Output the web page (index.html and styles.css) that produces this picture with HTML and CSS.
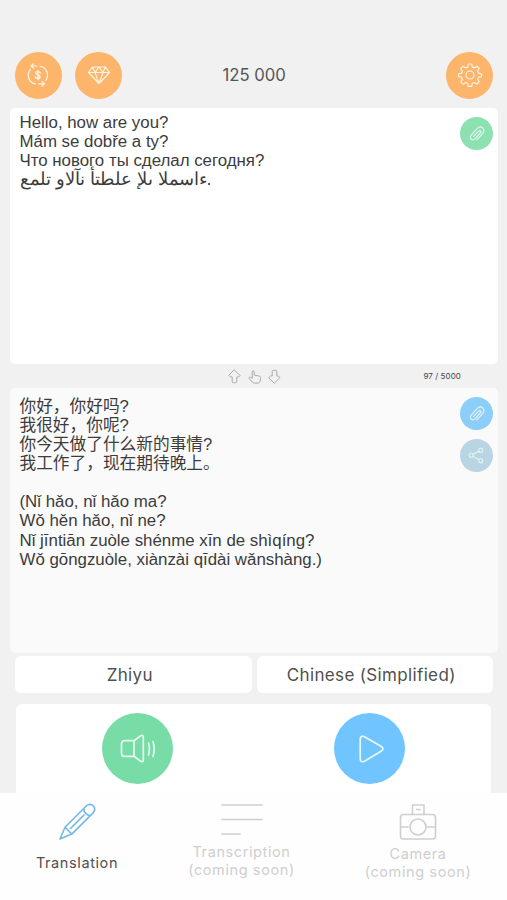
FILE: index.html
```html
<!DOCTYPE html>
<html lang="en">
<head>
  <meta charset="UTF-8" />
  <meta name="viewport" content="width=device-width, initial-scale=1.0"/>
  <title>Translator</title>
  <link rel="stylesheet" href="styles.css">
</head>
<body>
  <header class="topbar">
    <button class="round orange">
      <svg width="24" height="24" viewBox="0 0 24 24">
        <path d="M7.500.8 5 3l2.500 2.300M5.200 3H11M4.300 6.500A9 9 0 0 0 9.500 21M19.700 17.500A9 9 0 0 0 14 3.200M12.500 20.800H18M16 18.400l2.500 2.300L16 23"/>
        <path class="bold" d="M14.400 10c-.4-.9-1.200-1.300-2.400-1.300-2.700 0-2.900 2.700-.2 3.200 3 .5 2.900 3.600-.1 3.600-1.300 0-2.200-.5-2.500-1.500M12 7.500v9.300"/>
      </svg>
    </button>
    <button class="round orange">
      <svg width="24" height="24" viewBox="0 0 24 24">
        <path d="M5.500 4h13l4 5.500L12 20.500 1.500 9.500zM1.500 9.500h21M5.500 4l2.500 5.500 4 11 4-11L18.500 4M8 9.500 12 4l4 5.500"/>
      </svg>
    </button>
    <div class="balance">125 000</div>
    <button class="round orange">
      <svg width="26" height="26" viewBox="0 0 26 26">
        <path d="M11.300 2h3.400l.6 3.100 2 .8 2.700-1.700 2.300 2.300-1.700 2.700.8 2 3.100.6v2.800l-3.100.6-.8 2 1.700 2.700-2.300 2.300-2.700-1.700-2 .8-.6 3.100h-3.400l-.6-3.100-2-.8L6 22.200l-2.300-2.300 1.700-2.700-.8-2-3.100-.6v-2.800l3.100-.6.8-2L3.700 6.500 6 4.200l2.700 1.700 2-.8z"/>
        <circle cx="13" cy="13" r="4"/>
      </svg>
    </button>
  </header>

  <section class="box source">
    <div class="text">
      <p>Hello, how are you?</p>
      <p>Mám se dobře a ty?</p>
      <p>Что нового ты сделал сегодня?</p>
      <p class="arabic" lang="ar">عملت والآن أتطلع إلى المساء.</p>
    </div>
    <div class="actions">
      <button class="round small green">
        <svg width="18" height="18" viewBox="0 0 16 16">
          <path d="M4.800 10.300 9.300 5.600c1.500-1.400 3 .1 1.600 1.600l-4.700 5.100c-2.400 2.200-5.500-.7-3.300-3.300L8.300 3c3.200-3.200 7.800.7 4.900 4.500l-5.400 5.800"/>
        </svg>
      </button>
    </div>
  </section>

  <div class="strip">
    <div class="arrows">
      <svg width="13" height="15" viewBox="0 0 13 15"><path d="M6.500 1 12 6.500 10.500 8H8.800v4.500c0 .8-.4 1.200-1.100 1.200H5.300c-.7 0-1.100-.4-1.100-1.200V8H2.500L1 6.500z"/></svg>
      <svg width="14" height="15" viewBox="0 0 14 15"><path d="M4.200 9V2.800c0-1.500 2-1.500 2 0v3.400l5 .8c1.300.3 1.700 1.200 1.500 2.400l-.7 3c-.3 1.200-1 1.700-2 1.700H6.500c-1 0-1.600-.4-2.100-1L1.300 9.600c-.8-1.200.6-2.100 1.500-1.300z"/></svg>
      <svg width="13" height="15" viewBox="0 0 13 15"><path d="M6.500 14 12 8.500 10.500 7H8.800V2.500c0-.8-.4-1.200-1.100-1.200H5.300c-.7 0-1.100.4-1.100 1.200V7H2.500L1 8.500z"/></svg>
    </div>
    <span class="counter">97 / 5000</span>
  </div>

  <section class="box result">
    <div class="text">
      <div class="chinese" lang="zh-CN">
        <p>你好，你好吗?</p>
        <p>我很好，你呢?</p>
        <p>你今天做了什么新的事情?</p>
        <p>我工作了，现在期待晚上。</p>
      </div>
      <div class="pinyin">
        <p>(Nǐ hǎo, nǐ hǎo ma?</p>
        <p>Wǒ hěn hǎo, nǐ ne?</p>
        <p>Nǐ jīntiān zuòle shénme xīn de shìqíng?</p>
        <p>Wǒ gōngzuòle, xiànzài qīdài wǎnshàng.)</p>
      </div>
    </div>
    <div class="actions">
      <button class="round small blue">
        <svg width="18" height="18" viewBox="0 0 16 16">
          <path d="M4.800 10.300 9.300 5.600c1.500-1.400 3 .1 1.600 1.600l-4.700 5.100c-2.400 2.200-5.500-.7-3.300-3.300L8.300 3c3.200-3.200 7.800.7 4.900 4.500l-5.400 5.800"/>
        </svg>
      </button>
      <button class="round small pale">
        <svg width="17" height="17" viewBox="0 0 16 16">
          <circle cx="3" cy="7.800" r="1.900"/>
          <circle cx="12" cy="3" r="1.900"/>
          <circle cx="12" cy="13" r="1.900"/>
          <path d="M4.700 6.900 10.300 4M4.700 8.800l5.600 3.200"/>
        </svg>
      </button>
    </div>
  </section>

  <div class="selects">
    <button class="select">Zhiyu</button>
    <button class="select">Chinese (Simplified)</button>
  </div>

  <section class="player">
    <button class="round big listen">
      <svg width="36" height="30" viewBox="0 0 36 30">
        <path d="M14 6.700H4.500C2.700 6.700 1.500 8 1.500 9.800v9.400c0 1.800 1.200 3.100 3 3.100H14zM14 6.700l6.700-4.900c1.300-1 2.600-.4 2.600 1.200v23c0 1.600-1.300 2.200-2.600 1.200L14 22.300M28.500 9c1.200 4 1.200 8 0 12M33 7.500c1.500 5 1.500 10 0 15"/>
      </svg>
    </button>
    <button class="round big play">
      <svg width="26" height="28" viewBox="0 0 26 28">
        <path d="M1.200 4.200c0-2.600 1.900-3.800 4.200-2.500l16.600 9.600c2.600 1.500 2.600 3.500 0 5L5.400 26.200c-2.300 1.300-4.200.1-4.200-2.500z"/>
      </svg>
    </button>
  </section>

  <nav class="tabs">
    <a class="tab active">
      <svg width="38" height="38" viewBox="0 0 38 38">
        <path d="M2 36 7 24.300 28.500 2.800c5.300-4 10.500 2.200 6.800 6.800L13.800 31.100zM7 24.300l6.800 6.800M25.800 5.500c-.2 4 3.400 7.200 6.800 7M12.500 25.500 26 12"/>
      </svg>
      <span>Translation</span>
    </a>
    <a class="tab transcription">
      <svg width="42" height="34" viewBox="0 0 42 34">
        <path d="M1 2h40M1 16.500h40M1 31h18"/>
      </svg>
      <span>Transcription<br>(coming soon)</span>
    </a>
    <a class="tab camera">
      <svg width="38" height="38" viewBox="0 0 38 38">
        <rect x="1.500" y="11.500" width="35" height="24.500" rx="3"/>
        <path d="M13.500 11.500V2h11.500v9.500M17.500 6.500h3.500M1.500 24H9M28 24h8.500"/>
        <circle cx="19" cy="24" r="8"/>
      </svg>
      <span>Camera<br>(coming soon)</span>
    </a>
  </nav>
</body>
</html>
```
FILE: styles.css
```css
* {
  box-sizing: border-box;
}
body {
  margin: 0;
  width: 507px;
  height: 900px;
  overflow: hidden;
  display: flex;
  flex-direction: column;
  background: #f1f1f1;
  color: #3c3c3c;
  font-family: Inter, sans-serif;
}
p {
  margin: 0;
}
button {
  border: none;
  padding: 0;
  font: inherit;
  color: inherit;
  cursor: pointer;
}
svg {
  display: block;
  fill: none;
  stroke: currentColor;
  stroke-width: 1.2;
  stroke-linecap: round;
  stroke-linejoin: round;
}
.bold {
  stroke-width: 1.4;
}
.topbar {
  display: grid;
  grid-template-columns: 47px 47px 1fr 47px;
  column-gap: 13.5px;
  align-items: center;
  height: 108px;
  padding: 42px 14px 0 14.5px;
}
.balance {
  padding-left: 87px;
  font-size: 16.7px;
  color: #555;
}
.round {
  display: flex;
  align-items: center;
  justify-content: center;
  width: 47px;
  height: 47px;
  border-radius: 50%;
  color: #fff3e2;
}
.orange {
  background: #fcb56b;
}
.small {
  width: 33px;
  height: 33px;
  color: #e4f6f3;
}
.small svg {
  stroke-width: 1;
}
.green {
  background: #8de0b0;
}
.blue {
  background: #8bcefa;
}
.pale {
  background: #b9d5e4;
}
.box {
  display: flex;
  justify-content: space-between;
  margin: 0 9px 0 10px;
  padding: 5px 5px 0 9.5px;
  border-radius: 5px;
}
.source {
  height: 256px;
  background: #fff;
}
.result {
  height: 265px;
  padding-top: 9px;
  background: #fafafa;
}
.text {
  font: 16.85px/19.1px "Liberation Sans", "Noto Sans CJK SC", sans-serif;
}
.arabic {
  height: 19px;
  font-size: 18px;
  direction: ltr;
  unicode-bidi: bidi-override;
}
.chinese {
  font-size: 16.7px;
}
.pinyin {
  margin-top: 19px;
}
.actions {
  display: flex;
  flex-direction: column;
  gap: 9px;
  padding-top: 4px;
}
.result .actions {
  padding-top: 0;
}
.strip {
  display: flex;
  justify-content: space-between;
  align-items: center;
  height: 24px;
  padding: 0 46px 0 228px;
}
.arrows {
  display: flex;
  gap: 6.5px;
  color: #aaa;
}
.arrows svg {
  stroke-width: 1;
}
.counter {
  font-size: 8px;
  letter-spacing: 0.1px;
  color: #444;
}
.selects {
  display: grid;
  grid-template-columns: 1fr 1fr;
  gap: 5px;
  padding: 3px 14px 0 15px;
}
.select {
  height: 37px;
  padding-right: 7px;
  border-radius: 6px;
  background: #fff;
  font-size: 17px;
  letter-spacing: 0.35px;
  color: #505050;
}
.player {
  display: flex;
  gap: 161px;
  height: 89px;
  margin: 11px 16px 0;
  padding: 9px 0 0 86px;
  border-radius: 6px 6px 0 0;
  background: #fff;
}
.big {
  width: 71px;
  height: 71px;
  color: #e6fbf2;
}
.big svg {
  stroke-width: 1.7;
}
.listen {
  background: #77dca5;
}
.play {
  background: #70c4ff;
}
.play svg {
  margin-left: 4px;
}
.tabs {
  flex: 1;
  display: grid;
  grid-template-columns: 154px 175px 1fr;
  padding-top: 10px;
  background: #fefefe;
  font-size: 14.5px;
  line-height: 18px;
  letter-spacing: 0.6px;
}
.tab {
  display: flex;
  flex-direction: column;
  align-items: center;
  text-align: center;
  color: #cfcfcf;
}
.tab svg {
  stroke-width: 1.6;
}
.active {
  color: #505050;
}
.active svg {
  color: #72b8e8;
}
.active span {
  margin-top: 13px;
}
.transcription span {
  margin-top: 6px;
}
.camera span {
  margin-top: 4px;
}
```
